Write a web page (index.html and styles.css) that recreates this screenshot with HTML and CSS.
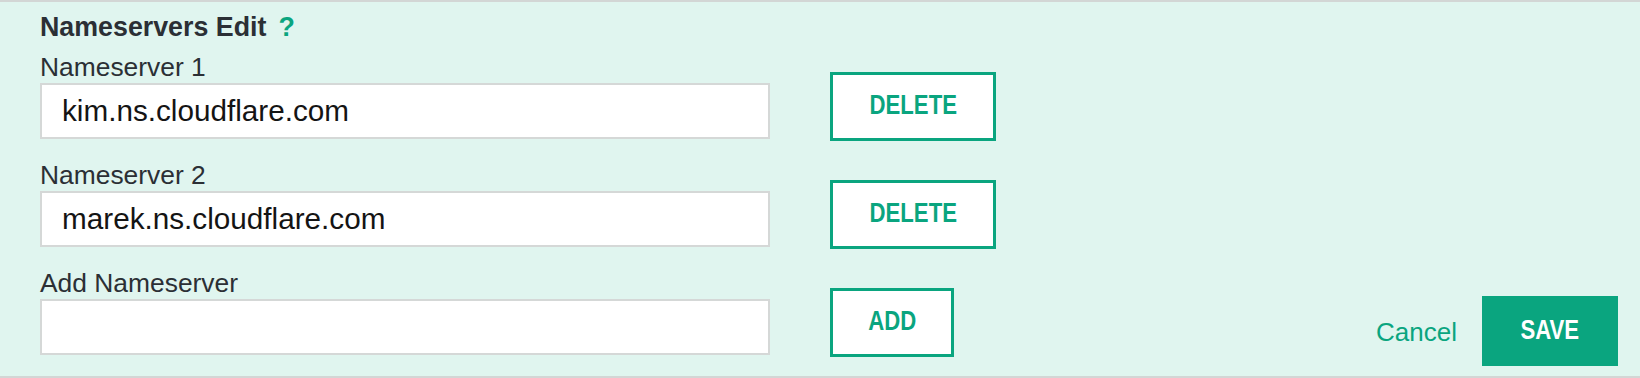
FILE: index.html
```html
<!DOCTYPE html>
<html lang="en">
<head>
<meta charset="utf-8">
<title>Nameservers Edit</title>
<link rel="stylesheet" href="styles.css">
</head>
<body>
<div class="panel">
  <div class="form">
    <h2 class="title">Nameservers Edit<span class="help">?</span></h2>
    <div class="row">
      <div class="field">
        <label class="label">Nameserver 1</label>
        <input class="input" type="text" value="kim.ns.cloudflare.com">
      </div>
      <button class="btn-outline btn-delete"><span class="narrow">DELETE</span></button>
    </div>
    <div class="row">
      <div class="field">
        <label class="label">Nameserver 2</label>
        <input class="input" type="text" value="marek.ns.cloudflare.com">
      </div>
      <button class="btn-outline btn-delete"><span class="narrow">DELETE</span></button>
    </div>
    <div class="row">
      <div class="field">
        <label class="label">Add Nameserver</label>
        <input class="input" type="text" value="">
      </div>
      <button class="btn-outline btn-add"><span class="narrow">ADD</span></button>
    </div>
  </div>
  <div class="actions">
    <a class="cancel" href="#">Cancel</a>
    <button class="btn-save"><span class="narrow">SAVE</span></button>
  </div>
</div>
</body>
</html>
```

FILE: styles.css
```css
html, body {
  margin: 0;
  padding: 0;
}
body {
  width: 1640px;
  height: 378px;
  background: #e0f5ef;
  font-family: "Liberation Sans", Arial, sans-serif;
}
.panel {
  box-sizing: border-box;
  height: 378px;
  border-top: 2px solid #d3d6d5;
  border-bottom: 2px solid #d3d6d5;
  background: #e0f5ef;
  display: flex;
  justify-content: space-between;
  padding: 10px 22px 10px 40px;
}
.form {
  display: flex;
  flex-direction: column;
  padding-bottom: 11px;
}
.title {
  margin: 0 0 9px 0;
  font-size: 26.8px;
  line-height: 30px;
  font-weight: bold;
  color: #2b2f35;
}
.help {
  color: #0aa57f;
  margin-left: 12px;
}
.row {
  display: flex;
  align-items: flex-end;
  gap: 60px;
  margin-bottom: 20px;
}
.row:last-child {
  margin-bottom: 0;
}
.field {
  display: flex;
  flex-direction: column;
}
.label {
  font-size: 26.4px;
  line-height: 32px;
  color: #2b2f35;
}
.input {
  box-sizing: border-box;
  width: 730px;
  height: 56px;
  margin: 0;
  border: 2px solid #d5d8d7;
  border-radius: 0;
  background: #fff;
  padding: 0 0 0 20px;
  font-family: "Liberation Sans", Arial, sans-serif;
  font-size: 29.7px;
  color: #141414;
  outline: none;
}
.btn-outline {
  box-sizing: border-box;
  height: 69px;
  margin: 0 0 -2px 0;
  padding: 0 0 3px 0;
  border: 3px solid #0aa57f;
  background: #fff;
  color: #0aa57f;
  font-family: "Liberation Sans", Arial, sans-serif;
  font-weight: bold;
  font-size: 27px;
  cursor: pointer;
  display: flex;
  align-items: center;
  justify-content: center;
}
.btn-delete {
  width: 166px;
}
.btn-add {
  width: 124px;
}
.narrow {
  display: inline-block;
  transform: scaleX(0.82);
  white-space: nowrap;
}
.actions {
  align-self: flex-end;
  display: flex;
  align-items: center;
  gap: 25px;
}
.cancel {
  color: #0aa57f;
  font-size: 26px;
  text-decoration: none;
  padding-top: 2px;
}
.btn-save {
  box-sizing: border-box;
  width: 136px;
  height: 70px;
  border: none;
  margin: 0;
  padding: 0 0 2px 0;
  background: #0aa57f;
  color: #fff;
  font-family: "Liberation Sans", Arial, sans-serif;
  font-weight: bold;
  font-size: 27px;
  cursor: pointer;
  display: flex;
  align-items: center;
  justify-content: center;
}
```
